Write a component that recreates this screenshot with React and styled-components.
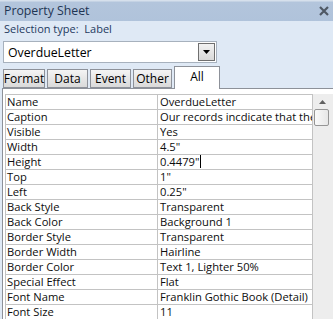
import React from "react";
import styled, { createGlobalStyle } from "styled-components";

const GlobalStyle = createGlobalStyle`
  html, body {
    margin: 0;
    padding: 0;
    background: #dfe9f5;
  }
  * {
    box-sizing: border-box;
  }
`;

const FONT = `"Open Sans", "Noto Sans", sans-serif`;

const Window = styled.div`
  width: 333px;
  height: 319px;
  overflow: hidden;
  display: flex;
  flex-direction: column;
  background: #dfe9f5;
  font-family: ${FONT};
`;

const TitleBar = styled.div`
  height: 21px;
  flex: none;
  display: flex;
  align-items: center;
  justify-content: space-between;
  padding: 0 3px 0 4px;
  background: linear-gradient(#d6e0ec 0, #d6e0ec 1px, #b3c5dc 2px, #b0c3db 100%);
  color: #1f3553;
  font-size: 12.3px;
`;

const CloseButton = styled.span`
  width: 10px;
  height: 10px;
  display: flex;
  margin-right: 1px;
`;

const SelectionLine = styled.div`
  height: 20px;
  flex: none;
  padding-left: 4px;
  line-height: 15px;
  font-size: 11px;
  color: #1e3a5f;
  white-space: pre;
`;

const Combo = styled.div`
  width: 214px;
  height: 22px;
  flex: none;
  margin-left: 3px;
  display: flex;
  align-items: center;
  justify-content: space-between;
  padding: 0 1px 0 4px;
  background: #fff;
  border: 1px solid #a7b1bd;
  font-size: 12.3px;
  color: #000;
`;

const ComboButton = styled.span`
  width: 17px;
  height: 18px;
  display: flex;
  align-items: center;
  justify-content: center;
  border: 1px solid #6f6f6f;
  background: linear-gradient(#f2f2f2, #d9d9d9);
`;

const TabStrip = styled.div`
  height: 22px;
  flex: none;
  margin-top: 3px;
  padding-left: 3px;
  display: flex;
  align-items: flex-end;
  gap: 2px;
  position: relative;
  z-index: 1;
`;

const Tab = styled.div`
  width: ${(p) => p.$w}px;
  height: ${(p) => (p.$active ? 23 : 19)}px;
  margin-bottom: ${(p) => (p.$active ? -1 : 0)}px;
  display: flex;
  align-items: center;
  justify-content: center;
  padding-bottom: ${(p) => (p.$active ? 3 : 0)}px;
  border: 1px solid #8d9199;
  border-bottom: ${(p) => (p.$active ? "none" : "1px solid #8d9199")};
  background: ${(p) =>
    p.$active ? "#fff" : "linear-gradient(#f4f4f4, #e8e8e8 45%, #dadada)"};
  font-size: 12px;
  color: #000;
`;

const SheetBox = styled.div`
  flex: 1;
  min-height: 0;
  margin-left: 2px;
  display: flex;
  align-items: flex-start;
  padding: 5px 0 0 2px;
  background: #fff;
  border-top: 1px solid #8d9199;
  border-left: 1px solid #8d9199;
`;

const Grid = styled.div`
  display: grid;
  grid-template-columns: 152px 155px;
  grid-auto-rows: 15px;
  border-top: 1px solid #c3c3c3;
  border-left: 1px solid #c3c3c3;
  flex: none;
`;

const Cell = styled.div`
  border-right: 1px solid #c3c3c3;
  border-bottom: 1px solid #c3c3c3;
  padding-left: ${(p) => (p.$value ? 2 : 1)}px;
  font-size: 11.2px;
  line-height: 14px;
  color: #0d0d0d;
  white-space: nowrap;
  overflow: hidden;
`;

const Caret = styled.span`
  display: inline-block;
  width: 1px;
  height: 13px;
  background: #000;
  vertical-align: -2px;
  margin-left: 1px;
`;

const ScrollBar = styled.div`
  flex: 1;
  align-self: stretch;
  display: flex;
  flex-direction: column;
  align-items: flex-start;
  padding-left: 1px;
  background: #ededed;
`;

const ScrollArrow = styled.div`
  width: 16px;
  height: 15px;
  display: flex;
  align-items: center;
  justify-content: center;
`;

const Thumb = styled.div`
  width: 15px;
  height: 17px;
  border: 1px solid #959595;
  border-radius: 2px;
  background: linear-gradient(90deg, #fafafa, #e7e7e7);
`;

const rows = [
  ["Name", "OverdueLetter"],
  ["Caption", "Our records incdicate that the payment for your account is overdue"],
  ["Visible", "Yes"],
  ["Width", "4.5\""],
  ["Height", "0.4479\"", true],
  ["Top", "1\""],
  ["Left", "0.25\""],
  ["Back Style", "Transparent"],
  ["Back Color", "Background 1"],
  ["Border Style", "Transparent"],
  ["Border Width", "Hairline"],
  ["Border Color", "Text 1, Lighter 50%"],
  ["Special Effect", "Flat"],
  ["Font Name", "Franklin Gothic Book (Detail)"],
  ["Font Size", "11"],
];

const tabs = [
  ["Format", 42],
  ["Data", 41],
  ["Event", 41],
  ["Other", 39],
  ["All", 46, true],
];

export default function App() {
  return (
    <>
      <GlobalStyle />
      <Window>
        <TitleBar>
          <span>Property Sheet</span>
          <CloseButton>
            <svg width="10" height="10" viewBox="0 0 10 10">
              <path d="M1 1 L9 9 M9 1 L1 9" stroke="#4f5864" strokeWidth="2.2" />
            </svg>
          </CloseButton>
        </TitleBar>
        <SelectionLine>{"Selection type:  Label"}</SelectionLine>
        <Combo>
          <span>OverdueLetter</span>
          <ComboButton>
            <svg width="7" height="4" viewBox="0 0 7 4">
              <path d="M0 0 H7 L3.5 4 Z" fill="#000" />
            </svg>
          </ComboButton>
        </Combo>
        <TabStrip>
          {tabs.map(([label, w, active]) => (
            <Tab key={label} $w={w} $active={active}>
              {label}
            </Tab>
          ))}
        </TabStrip>
        <SheetBox>
          <Grid>
            {rows.map(([name, value, caret]) => (
              <React.Fragment key={name}>
                <Cell>{name}</Cell>
                <Cell $value>
                  {value}
                  {caret && <Caret />}
                </Cell>
              </React.Fragment>
            ))}
          </Grid>
          <ScrollBar>
            <ScrollArrow>
              <svg width="7" height="4" viewBox="0 0 7 4">
                <path d="M0 4 H7 L3.5 0 Z" fill="#606060" />
              </svg>
            </ScrollArrow>
            <Thumb />
          </ScrollBar>
        </SheetBox>
      </Window>
    </>
  );
}
